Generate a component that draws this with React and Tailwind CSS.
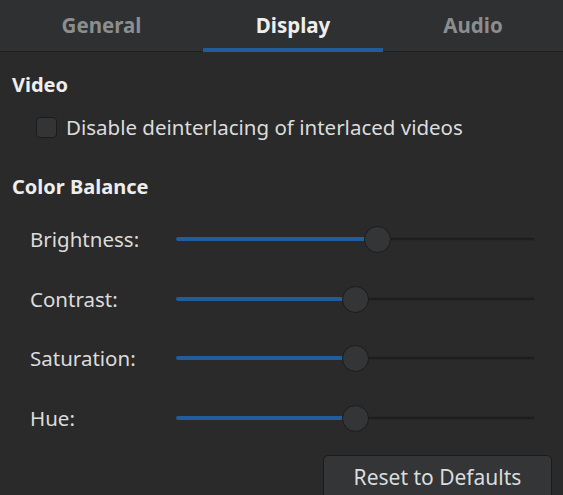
import { useState } from 'react';

const SLIDERS = [
  { label: 'Brightness:', knob: 377 },
  { label: 'Contrast:', knob: 355 },
  { label: 'Saturation:', knob: 355 },
  { label: 'Hue:', knob: 355 },
];

const TRACK_START = 176;

function Slider({ knob }) {
  const fill = knob - TRACK_START;
  return (
    <div className="relative h-[28px] w-[359px]">
      <div className="absolute left-0 right-0 top-[12px] h-[4px] rounded-full bg-[#1e1e1e] border border-[#262626]" />
      <div className="absolute left-0 top-[12px] h-[4px] rounded-full bg-[#215d9c]" style={{ width: fill }} />
      <div
        className="absolute top-[1px] h-[27px] w-[27px] rounded-full bg-[#333537] border border-[#1b1b1b]"
        style={{ left: fill - 13.5 }}
      />
    </div>
  );
}

export default function App() {
  const [tab] = useState('Display');
  const tabs = [
    { name: 'General', w: 'w-[203px]' },
    { name: 'Display', w: 'w-[180px]' },
    { name: 'Audio', w: 'w-[180px]' },
  ];

  return (
    <div
      className="w-[563px] h-[495px] overflow-hidden bg-[#2a2a2a] text-[#eeeeec]"
      style={{ fontFamily: '"Noto Sans", "Open Sans", sans-serif' }}
    >
      <div className="flex h-[52px] bg-[#2f3032] border-b border-[#1f1f1f]">
        {tabs.map((t) => (
          <div
            key={t.name}
            className={`${t.w} relative flex justify-center pt-[11px] text-[20.5px] leading-[28px] font-bold ${
              tab === t.name ? 'text-[#eeeeec]' : 'text-[#8b8e8f]'
            }`}
          >
            {t.name}
            {tab === t.name && (
              <div className="absolute left-0 right-0 bottom-[-1px] h-[4px] bg-[#215d9c]" />
            )}
          </div>
        ))}
      </div>

      <div className="pl-[12px] pt-[20px]">
        <div className="text-[20px] font-bold leading-[26px]">Video</div>
        <label className="flex items-center gap-[9px] pl-[24px] mt-[16px]">
          <span className="h-[21px] w-[21px] rounded-[4px] bg-[#323436] border border-[#1b1b1b]" />
          <span className="text-[20.5px] leading-[26px] text-[#dcdcdc]">Disable deinterlacing of interlaced videos</span>
        </label>

        <div className="text-[20px] font-bold leading-[26px] mt-[34px]">Color Balance</div>

        <div className="flex flex-col gap-[31.6px] mt-[25px]">
          {SLIDERS.map((s) => (
            <div key={s.label} className="flex items-center h-[28px]">
              <span className="w-[164px] pl-[18px] text-[20.5px] leading-[28px] text-[#dcdcdc]">{s.label}</span>
              <Slider knob={s.knob} />
            </div>
          ))}
        </div>

        <div className="flex justify-end pr-[11px] mt-[23px]">
          <button className="w-[229px] h-[48px] rounded-[5px] bg-[#333537] border border-[#1b1b1b] text-[21px] leading-[28px] text-[#dcdcdc] pb-[4px]">
            Reset to Defaults
          </button>
        </div>
      </div>
    </div>
  );
}
